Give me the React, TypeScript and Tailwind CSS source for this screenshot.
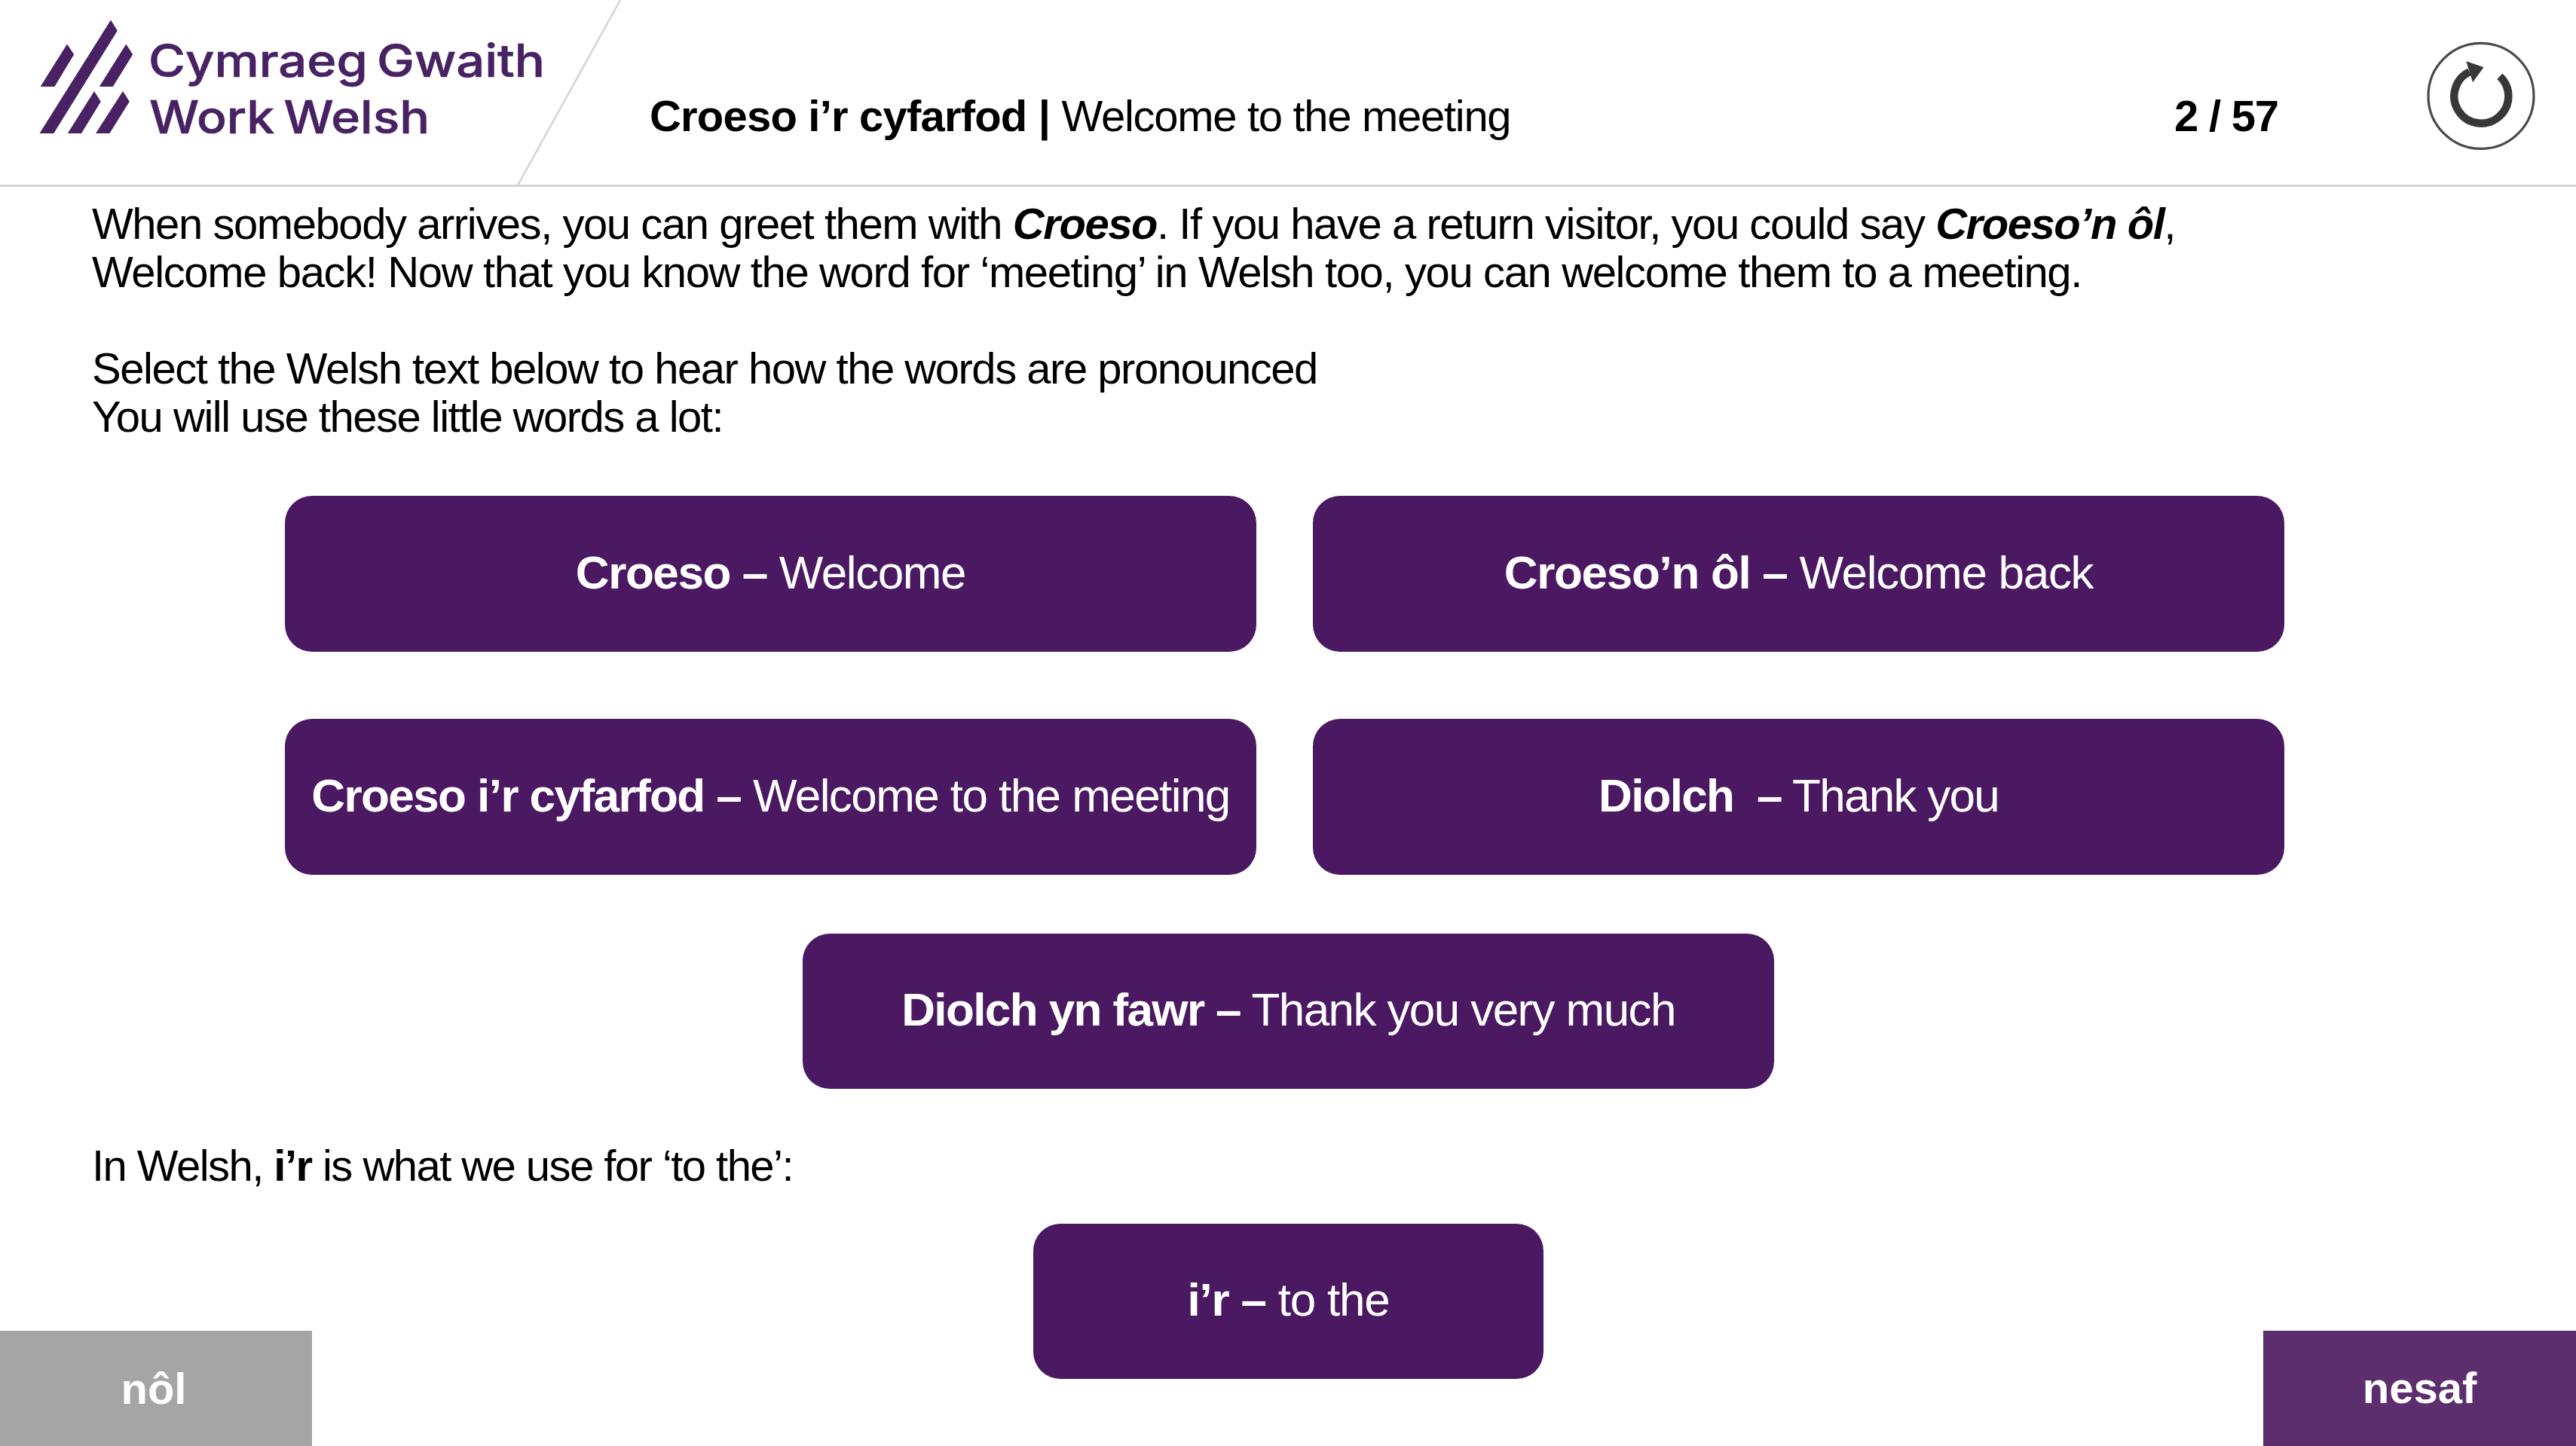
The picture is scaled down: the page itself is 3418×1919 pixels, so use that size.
import type { ReactNode } from "react"
import clsx from "clsx"

interface PhraseProps {
  welsh: string
  english: string
  className?: string
}

const phrases: PhraseProps[] = [
  { welsh: "Croeso –", english: "Welcome", className: "tracking-[-1.4px]" },
  { welsh: "Croeso’n ôl –", english: "Welcome back", className: "tracking-[-1.3px]" },
  { welsh: "Croeso i’r cyfarfod –", english: "Welcome to the meeting", className: "tracking-[-1.57px]" },
  { welsh: "Diolch  –", english: "Thank you", className: "tracking-[-1.75px]" },
]

function Phrase({ welsh, english, className }: PhraseProps) {
  return <button className={clsx("flex items-center justify-center rounded-[36px] bg-[#4b1862] pb-1 text-[62px] leading-none text-white whitespace-pre", className)}>
    <span><b>{welsh}</b> {english}</span>
  </button>
}

function Line({ children, className }: { children?: ReactNode, className?: string }) {
  return <p className={clsx("h-[64px] whitespace-pre", className)}>{children}</p>
}

function Logo() {
  return <svg className="h-[245px] w-[862px] shrink-0" viewBox="0 0 862 245">
    <g fill="#482263">
      <path d="M147 26.5 155.8 40.7 71.3 177H52.5Z" />
      <path d="M89 58.5 98.2 72.3 72.4 115H53.6Z" />
      <path d="M167.3 58.5 176.2 72.3 149.8 115H131.8Z" />
      <path d="M125 121 133.8 134.7 108 177H89.8Z" />
      <path d="M163 121 171.8 134.7 145.4 177H127Z" />
      <g className="font-['Inter',sans-serif] text-[60px] font-medium [word-spacing:-5px]" stroke="#482263" strokeWidth="0.6">
        <text x="197" y="102" textLength="526" lengthAdjust="spacingAndGlyphs">Cymraeg Gwaith</text>
        <text x="198" y="177" textLength="372" lengthAdjust="spacingAndGlyphs">Work Welsh</text>
      </g>
    </g>
    <path d="M823 0 687 246" stroke="#d4d4d4" strokeWidth="2.5" />
  </svg>
}

function ReloadButton() {
  return <button className="mt-[55px] ml-auto mr-[54px] size-[144px]">
    <svg viewBox="0 0 144 144">
      <circle cx="72" cy="72.4" r="70" fill="#fff" stroke="#4a4a4a" strokeWidth="3.2" />
      <path d="M56.5 40.3A36 36 0 1 0 96.8 46.2" fill="none" stroke="#383838" strokeWidth="10.4" />
      <path d="M52.3 26.3 75.5 34.3 61 54.3Z" fill="#383838" />
    </svg>
  </button>
}

export default function App() {
  return <div className="flex h-[1919px] w-[3418px] flex-col overflow-hidden bg-white font-['Liberation_Sans',Arial,sans-serif] text-[58px] leading-[64px] text-black">
    <header className="flex h-[248px] shrink-0 items-start border-b-[3px] border-[#d4d4d4]">
      <Logo />
      <h1 className="mt-[122px] w-[2023px] tracking-[-1.3px] whitespace-pre">
        <b className="tracking-[-0.8px]">Croeso i’r cyfarfod | </b>Welcome to the meeting
      </h1>
      <div className="mt-[122px] font-bold tracking-[-1.2px]">2 / 57</div>
      <ReloadButton />
    </header>

    <div className="px-[122px] pt-[17px]">
      <Line className="tracking-[-1.44px]">When somebody arrives, you can greet them with <b><i>Croeso</i></b>. If you have a return visitor, you could say <b><i>Croeso’n ôl</i></b>,</Line>
      <Line className="tracking-[-1.37px]">Welcome back! Now that you know the word for ‘meeting’ in Welsh too, you can welcome them to a meeting.</Line>
      <Line />
      <Line className="tracking-[-1.48px]">Select the Welsh text below to hear how the words are pronounced</Line>
      <Line className="tracking-[-1.5px]">You will use these little words a lot:</Line>
    </div>

    <main className="mt-[73px] ml-[378px] grid w-[2653px] grid-cols-2 auto-rows-[207px] gap-x-[75px] gap-y-[89px]">
      {phrases.map(p => <Phrase key={p.welsh} {...p} />)}
    </main>
    <Phrase welsh="Diolch yn fawr –" english="Thank you very much" className="mt-[78px] ml-[1065px] h-[206px] w-[1289px] shrink-0 tracking-[-1.6px]" />

    <div className="mt-[70px] px-[122px]">
      <Line className="tracking-[-1.55px]">In Welsh, <b>i’r</b> is what we use for ‘to the’:</Line>
    </div>

    <footer className="flex flex-1 items-end text-white">
      <button className="h-[153px] w-[414px] bg-[#a5a5a5] pr-1.5 font-bold">nôl</button>
      <Phrase welsh="i’r –" english="to the" className="mt-[45px] ml-[957px] h-[206px] w-[677px] self-start tracking-[-1.2px]" />
      <button className="ml-auto h-[153px] w-[415px] bg-[#5c2e6e] pb-0.5 font-bold">nesaf</button>
    </footer>
  </div>
}
